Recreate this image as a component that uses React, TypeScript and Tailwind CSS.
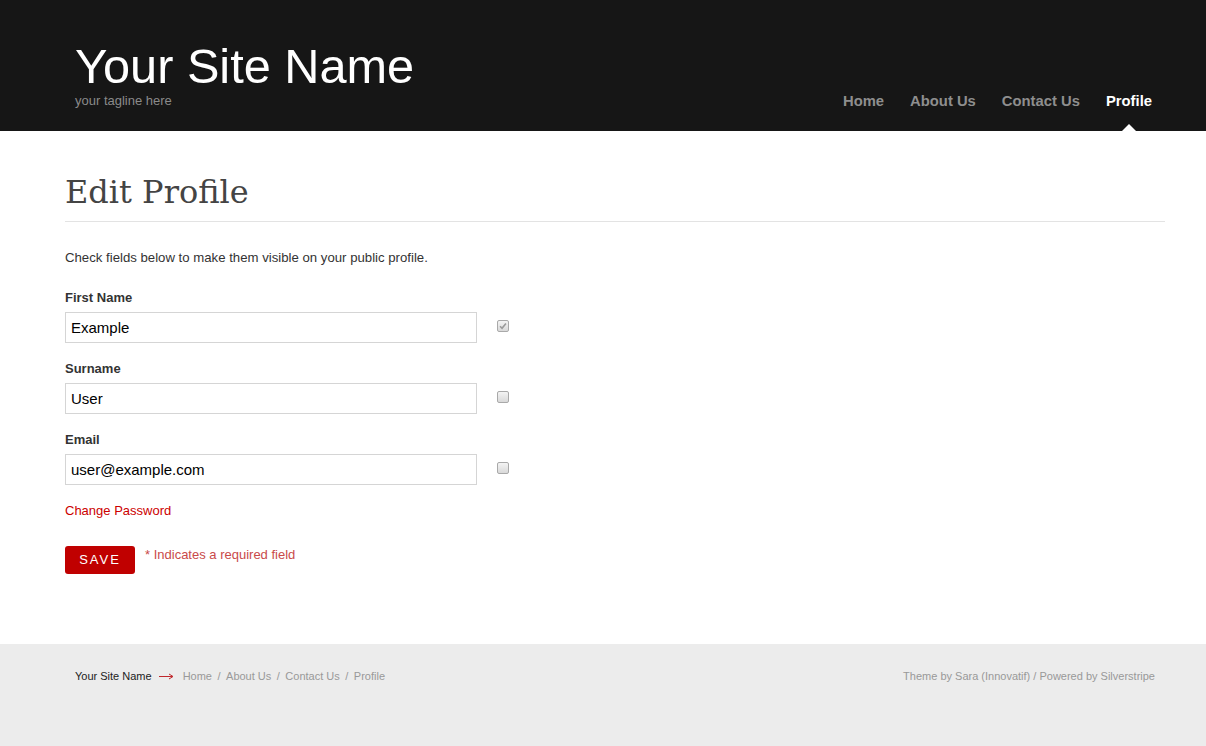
import React from 'react';

const sans = { fontFamily: '"Liberation Sans", Arial, sans-serif' };

function Box({ checked }: { checked?: boolean }) {
  return (
    <span className="relative mt-[8px] ml-[20px] flex h-[12px] w-[12px] items-center justify-center rounded-[2px] border border-[#a9a9a9] bg-gradient-to-b from-[#f4f4f4] to-[#d9d9d9]">
      {checked && (
        <svg width="8" height="8" viewBox="0 0 9 9">
          <path d="M1.2 4.8 L3.4 7 L7.8 1.6" stroke="#9a9a9a" strokeWidth="1.8" fill="none" />
        </svg>
      )}
    </span>
  );
}

function Field({ label, value, checked }: { label: string; value: string; checked?: boolean }) {
  return (
    <div className="mb-[18px]">
      <div className="h-[16px] text-[13px] font-bold leading-[16px] text-[#333]">{label}</div>
      <div className="mt-[6px] flex items-start">
        <input
          readOnly
          value={value}
          className="h-[31px] w-[412px] border border-[#d5d5d5] bg-white px-[5px] text-[15px] text-black outline-none"
          style={sans}
        />
        <Box checked={checked} />
      </div>
    </div>
  );
}

export default function App() {
  return (
    <div className="min-h-[746px] bg-white" style={sans}>
      <header className="relative h-[131px] bg-[#161616]">
        <div className="flex h-full items-start justify-between pl-[75px] pr-[54px]">
          <div className="pt-[38px]">
            <div className="text-[48.7px] leading-[56px] text-white">Your Site Name</div>
            <div className="mt-[-1px] text-[13px] leading-[16px] text-[#8a8a8a]">your tagline here</div>
          </div>
          <nav className="flex gap-[26px] pt-[92px] text-[14.8px] font-bold leading-[18px]">
            <span className="text-[#8e8e8e]">Home</span>
            <span className="text-[#8e8e8e]">About Us</span>
            <span className="text-[#8e8e8e]">Contact Us</span>
            <span className="relative text-white">
              Profile
              <span className="absolute left-1/2 top-[32px] h-0 w-0 -translate-x-1/2 border-x-[7px] border-b-[7px] border-x-transparent border-b-white" />
            </span>
          </nav>
        </div>
      </header>

      <main className="px-[65px] pb-[70px] pt-[42px] pr-[41px]">
        <h1
          className="border-b border-[#e3e3e3] pb-[10px] text-[32px] leading-[38px] text-[#444]"
          style={{ fontFamily: '"DejaVu Serif", "Liberation Serif", serif' }}
        >
          Edit Profile
        </h1>
        <p className="mt-[28px] text-[13.2px] leading-[16px] text-[#333]">
          Check fields below to make them visible on your public profile.
        </p>
        <div className="mt-[24px]">
          <Field label="First Name" value="Example" checked />
          <Field label="Surname" value="User" />
          <Field label="Email" value="user@example.com" />
        </div>
        <a className="block text-[13px] leading-[16px] text-[#c00]">Change Password</a>
        <div className="mt-[27px] flex items-start gap-[10px]">
          <button className="h-[28px] w-[70px] rounded-[3px] bg-[#c00000] text-[13px] tracking-[2px] text-white">
            SAVE
          </button>
          <span className="mt-[1px] text-[13px] leading-[16px] text-[#c94a4a]">* Indicates a required field</span>
        </div>
      </main>

      <footer className="h-[102px] bg-[#ececec] pl-[75px] pr-[51px] pt-[25px]">
        <div className="flex items-center justify-between text-[11px] leading-[14px]">
          <div className="flex items-center">
            <span className="text-[#222]">Your Site Name</span>
            <svg className="ml-[7px] mr-[9px]" width="15" height="7" viewBox="0 0 15 7">
              <path d="M0 3.5 H13.5" stroke="#c0282d" strokeWidth="1" />
              <path d="M10 1 L14 3.5 L10 6" stroke="#c0282d" strokeWidth="1" fill="none" />
            </svg>
            <span className="text-[#999]">Home</span>
            <span className="mx-[5.5px] text-[#999]">/</span>
            <span className="text-[#999]">About Us</span>
            <span className="mx-[5.5px] text-[#999]">/</span>
            <span className="text-[#999]">Contact Us</span>
            <span className="mx-[5.5px] text-[#999]">/</span>
            <span className="text-[#999]">Profile</span>
          </div>
          <div className="text-[#999]">Theme by Sara (Innovatif) / Powered by Silverstripe</div>
        </div>
      </footer>
    </div>
  );
}
